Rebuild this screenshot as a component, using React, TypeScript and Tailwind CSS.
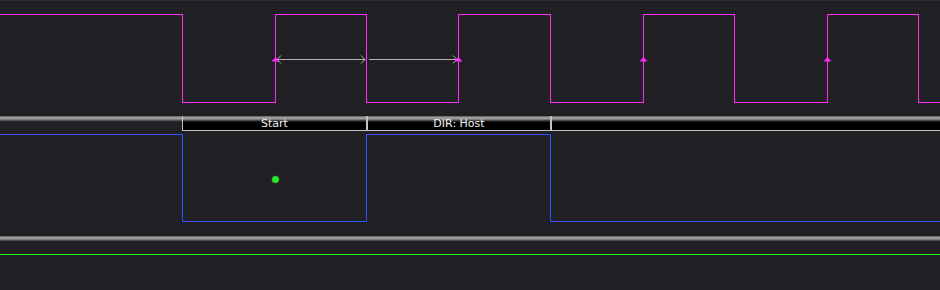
import React from "react";

const stripBg =
  "bg-[linear-gradient(to_bottom,#5a5a5a_0px,#b0b0b0_2px,#7a7a7a_3.5px,#3a3a3a_5px,#1f1f24_6px)]";
const segBg =
  "bg-[linear-gradient(to_bottom,#5a5a5a_0px,#b0b0b0_2px,#7a7a7a_3.5px,#2a2a2a_5px,#000000_6.5px)]";

const MAG = "#ff2cff";
const rising = [275, 458, 643, 827];

export default function App() {
  return (
    <div className="w-[940px] h-[290px] bg-[#1f1f24] flex flex-col overflow-hidden" style={{ fontFamily: '"DejaVu Sans", sans-serif' }}>
      <div className="h-[1px] bg-[#2c2c31]" />
      <svg width={940} height={115} viewBox="0 1 940 115" shapeRendering="crispEdges" className="block">
        <path
          d="M0 14.5 H182.5 V102.5 H275.5 V14.5 H366.5 V102.5 H458.5 V14.5 H550.5 V102.5 H643.5 V14.5 H734.5 V102.5 H827.5 V14.5 H918.5 V102.5 H940"
          fill="none"
          stroke={MAG}
          strokeWidth={1}
        />
        <g stroke="#b4b4b4" strokeWidth={1} fill="none">
          <line x1={277} y1={59.5} x2={365} y2={59.5} />
          <polyline points="281,55.5 277,59.5 281,63.5" shapeRendering="auto" />
          <polyline points="361,55.5 365,59.5 361,63.5" shapeRendering="auto" />
          <line x1={369} y1={59.5} x2={457} y2={59.5} />
          <polyline points="453,55.5 457,59.5 453,63.5" shapeRendering="auto" />
        </g>
        {rising.map((x) => (
          <polygon key={x} points={`${x - 3.5},61.5 ${x + 4.5},61.5 ${x + 0.5},57`} fill={MAG} shapeRendering="auto" />
        ))}
      </svg>
      <div className="h-[15px] flex">
        <div className={`w-[182px] h-full ${stripBg}`} />
        <div className={`w-[184px] h-full ${segBg} border-l border-b border-[#c4c4c4] flex items-center justify-center text-[11px] leading-none text-[#f2f2f2] pt-[1px]`}>
          Start
        </div>
        <div className={`w-[184px] h-full ${segBg} border-l-2 border-b border-[#c4c4c4] flex items-center justify-center text-[11px] leading-none text-[#f2f2f2] pt-[1px]`}>
          DIR: Host
        </div>
        <div className={`flex-1 h-full ${segBg} border-l-2 border-b border-[#c4c4c4]`} />
      </div>
      <svg width={940} height={105} viewBox="0 131 940 105" shapeRendering="crispEdges" className="block">
        <path
          d="M0 134.5 H182.5 V221.5 H366.5 V134.5 H550.5 V221.5 H940"
          fill="none"
          stroke="#3350ff"
          strokeWidth={1}
        />
        <circle cx={275.5} cy={179.5} r={3.6} fill="#22ee22" stroke="#4a7a4a" strokeWidth={0.6} shapeRendering="auto" />
      </svg>
      <div className={`h-[5px] ${stripBg}`} />
      <svg width={940} height={49} viewBox="0 241 940 49" shapeRendering="crispEdges" className="block">
        <line x1={0} y1={254.5} x2={940} y2={254.5} stroke="#22ff22" strokeWidth={1} />
      </svg>
    </div>
  );
}
